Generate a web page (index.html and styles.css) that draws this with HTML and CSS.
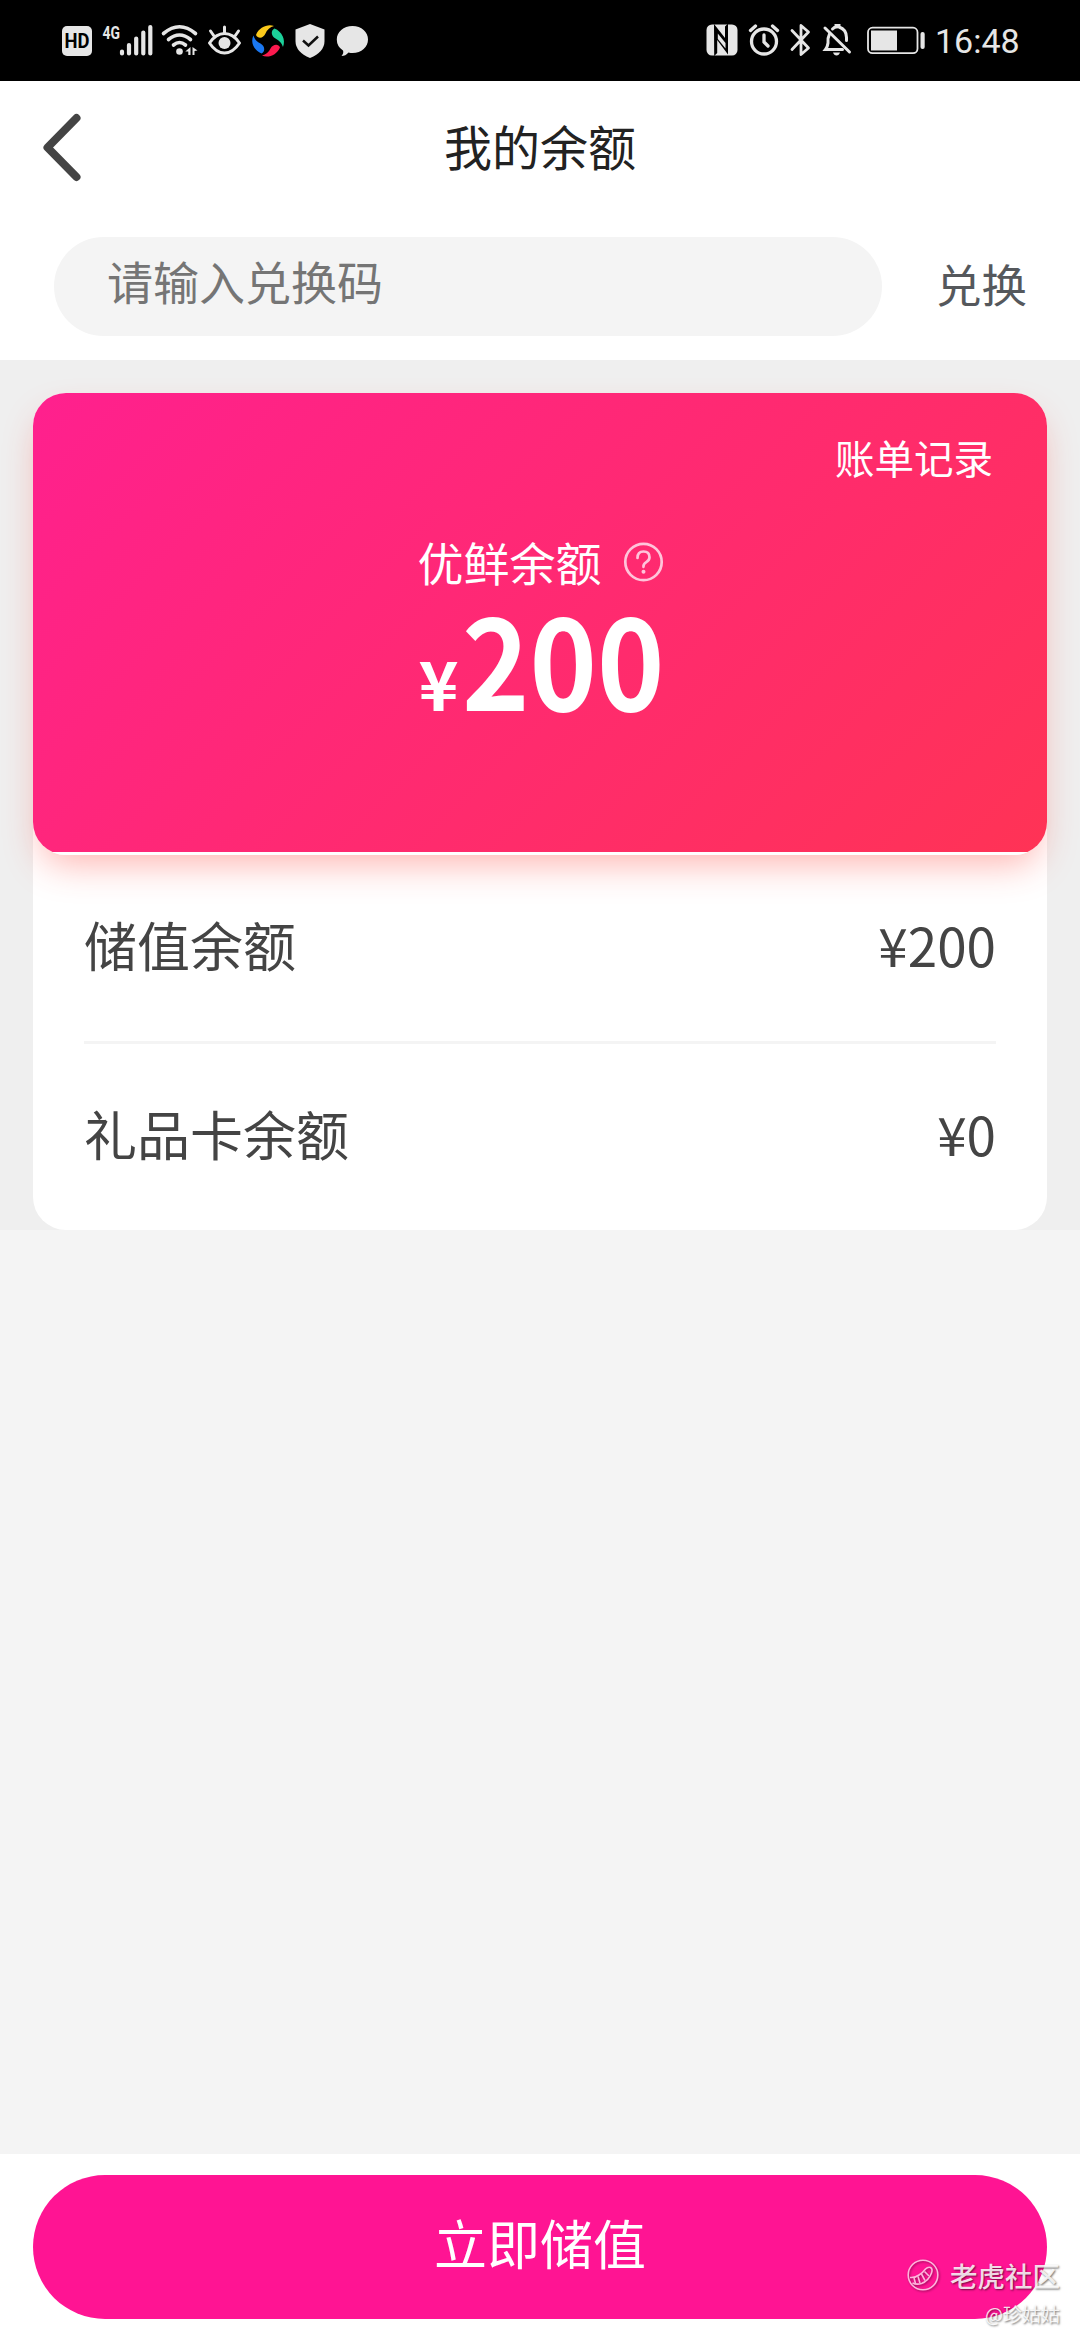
FILE: index.html
```
<!DOCTYPE html>
<html lang="zh-CN">

<head>
    <title>我的余额</title>
    <meta charset="utf-8" />
    <link rel="stylesheet" href="styles.css">
</head>

<body>
    <div class="status">
        <div class="status-icons">
            <svg width="37" height="60" viewBox="60 10 37 60">
                <rect x="62" y="26" width="30" height="30" rx="5" fill="#e6e6e6" />
                <text x="77" y="47.8" class="hd" text-anchor="middle" textLength="25" lengthAdjust="spacingAndGlyphs">HD</text>
            </svg>
            <svg width="61" height="60" viewBox="97 10 61 60">
                <text x="102.5" y="38.5" class="net" textLength="17.5" lengthAdjust="spacingAndGlyphs">4G</text>
                <path d="M122 51.5v2M129 45v8.500M136.200 38.500v15M143.300 32.500v21M150.300 27v26.500" fill="none" stroke="#e6e6e6" stroke-width="4.200" stroke-linecap="round" />
            </svg>
            <svg width="46" height="60" viewBox="158 10 46 60">
                <g fill="none" stroke="#e6e6e6" stroke-width="3.600" stroke-linecap="round">
                    <path d="M163.500 33.500Q179.500 20 195.500 33.500" />
                    <path d="M168.500 39.500Q179.500 30.500 190.500 39.500" />
                    <path d="M173.500 45Q179.500 40 185.500 45" />
                </g>
                <circle cx="179.500" cy="51.500" r="3.300" fill="#e6e6e6" />
                <path d="M190.500 47v8h-2.200v-3.600h-3zM192.500 47l5 3.500-3 .5v4h-2z" fill="#e6e6e6" />
            </svg>
            <svg width="43" height="60" viewBox="204 10 43 60">
                <path d="M209.500 43Q216 33.500 224.500 33.500T239.500 43Q233 53 224.500 53T209.500 43z" fill="none" stroke="#e6e6e6" stroke-width="3" stroke-linejoin="round" />
                <circle cx="224.500" cy="43" r="6" fill="#e6e6e6" />
                <path d="M210.500 31l3.500 5M224.500 27v6M238.500 31l-3.500 5" stroke="#e6e6e6" stroke-width="3" stroke-linecap="round" />
            </svg>
            <svg width="43" height="60" viewBox="247 10 43 60">
                <path d="M256 35C259 27 268 23.500 274 26Q268 27.500 265.500 33.500C263.500 38.500 258 39 256 35z" fill="#fbc91b" />
                <path d="M274.500 28.500C282 31.500 286 40 283 47Q281.500 41.500 275.500 38.500C271 36 270.500 30.500 274.500 28.500z" fill="#1cd19a" />
                <path d="M280 47.500C277 55 268 58.500 262 55.500Q268 54 270.500 48.500C273 44 278.500 43.500 280 47.500z" fill="#fb1a4f" />
                <path d="M261.500 53.500C254 50.500 250 42 253.500 35.500Q254.500 40.500 260.500 43.500C265 46 265.500 51.500 261.500 53.500z" fill="#1a78f2" />
            </svg>
            <svg width="42" height="60" viewBox="290 10 42 60">
                <path d="M310 24l14.500 5.500v11.500q0 11-14.500 17-14.500-6-14.500-17v-11.500z" fill="#e6e6e6" />
                <path d="M303 40.500l5.500 5 9.500-9" fill="none" stroke="#111" stroke-width="2.500" />
            </svg>
            <svg width="40" height="60" viewBox="332 10 40 60">
                <path d="M352.500 26c9 0 15.500 6 15.500 13.500S361.500 53 352.500 53q-2 0-4-.5-3 3.500-7 3.500 2.500-3 1.500-5.500-6.200-4-6.200-11C336.800 32 343.500 26 352.500 26z" fill="#e6e6e6" />
            </svg>
        </div>
        <div class="status-icons">
            <svg width="46" height="60" viewBox="700 10 46 60">
                <rect x="706.500" y="24.500" width="31" height="31" rx="5.500" fill="#e6e6e6" />
                <path d="M714 24l11 14v-11.500l3-3v31l-10.800-14.500v13l-3 3z" fill="#000" />
                <path d="M717.800 33.500l7.700 9.500v5.500l-7.700-9.500z" fill="#e6e6e6" />
            </svg>
            <svg width="38" height="60" viewBox="746 10 38 60">
                <g fill="none" stroke="#e6e6e6" stroke-width="3.300" stroke-linecap="round">
                    <circle cx="764" cy="41.500" r="12.500" />
                    <path d="M764 35v7l4 4M750.500 30.500l5-4.500M777.500 30.500l-5-4.500" />
                </g>
            </svg>
            <svg width="35" height="60" viewBox="784 10 35 60">
                <path d="M792 30.500l16.500 17.500-7.500 6.500v-29l7.500 6.500-16.500 17.500" fill="none" stroke="#e6e6e6" stroke-width="2.800" stroke-linejoin="round" stroke-linecap="round" />
            </svg>
            <svg width="43" height="60" viewBox="819 10 43 60">
                <g fill="none" stroke="#e6e6e6" stroke-width="3" stroke-linecap="round">
                    <path d="M825 28l24.500 24" />
                    <path d="M829.500 34q-2 4-1.500 9-.5 4-2.500 6.500h17" />
                    <path d="M832.500 29q2-2 3.500-2v-1.500h3v1.500q7.500 2.500 7.500 10.500v3" />
                </g>
                <path d="M833 52.500h7q-1 3-3.500 3t-3.500-3z" fill="#e6e6e6" />
            </svg>
            <svg width="68" height="60" viewBox="862 10 68 60">
                <rect x="868" y="27.700" width="49.500" height="25.500" rx="4.500" fill="none" stroke="#e6e6e6" stroke-width="1.800" />
                <rect x="871" y="30.500" width="26" height="20" fill="#e6e6e6" />
                <rect x="920.500" y="32" width="4.200" height="17" rx="2" fill="#e6e6e6" />
            </svg>
            <span class="clock">16:48</span>
        </div>
    </div>

    <div class="header">
        <div class="titlebar">
            <svg class="back" width="60" height="80" viewBox="0 0 60 80">
                <path d="M43.500 9L14.500 38.500l29 29.500" />
            </svg>
            <span class="title">我的余额</span>
        </div>
        <div class="redeem">
            <input class="code" type="text" placeholder="请输入兑换码">
            <span class="redeem-btn">兑换</span>
        </div>
    </div>

    <div class="balance">
        <div class="panel">
            <div class="card">
                <div class="bill">账单记录</div>
                <div class="label">
                    <span>优鲜余额</span>
                    <svg width="40" height="40" viewBox="0 0 40 40">
                        <circle cx="20.500" cy="21" r="18.200" />
                        <path d="M14.500 17q0-6.500 6-6.500t6 5.800q0 3-3.200 4.800t-2.800 4.700" />
                        <circle class="dot" cx="20.500" cy="30.800" r="2" />
                    </svg>
                </div>
                <div class="amount"><span class="yen">¥</span><span class="num">200</span></div>
            </div>
            <div class="row">
                <span>储值余额</span>
                <span>¥200</span>
            </div>
            <div class="row">
                <span>礼品卡余额</span>
                <span>¥0</span>
            </div>
        </div>
    </div>

    <div class="footer">
        <div class="submit">立即储值</div>
        <div class="mark">
            <div class="mark-name">
                <svg width="32" height="32" viewBox="0 0 32 32">
                    <circle cx="16" cy="16" r="14.800" />
                    <path d="M3 18.500q5 .5 9-2.500 4-2.500 6.500-6 2.500-2.500 5-1.500 2.500 1.500 1 5.500-3 8-10 10.500-5 1.500-9-.5" />
                    <path d="M7 19l1.500 5.500M11 17.500l2 6.500M14.500 15l3.500 6.500M17.500 12.500l4.500 4.500" />
                </svg>
                <span>老虎社区</span>
            </div>
            <div class="mark-user">@珍姑姑</div>
        </div>
    </div>
</body>

</html>
```
FILE: styles.css
```
* {
    box-sizing: border-box;
}

body {
    margin: 0;
    width: 1080px;
    height: 2340px;
    display: flex;
    flex-direction: column;
    overflow: hidden;
    background: #f4f4f4;
    font-family: "Noto Sans CJK SC", sans-serif;
}

svg {
    display: block;
    flex: none;
    overflow: visible;
}

/* status bar */
.status {
    height: 81px;
    padding: 10px 59px 11px 60px;
    display: flex;
    justify-content: space-between;
    background: #000;
}

.status-icons {
    display: flex;
}

.hd {
    font: 700 20px Roboto, sans-serif;
    fill: #000;
}

.net {
    font: 700 19px Roboto, sans-serif;
    fill: #e6e6e6;
}

.clock {
    width: 91px;
    padding-left: 5px;
    font: 34px/62px Roboto, sans-serif;
    color: #e6e6e6;
}

/* header */
.header {
    height: 279px;
    background: #fff;
}

.titlebar {
    height: 156px;
    padding: 0 33px 20px;
    display: grid;
    grid-template-columns: 60px 1fr 60px;
    align-items: center;
}

.back path {
    fill: none;
    stroke: #444;
    stroke-width: 8;
    stroke-linecap: round;
    stroke-linejoin: round;
}

.title {
    padding-bottom: 8px;
    text-align: center;
    font-size: 48px;
    line-height: 60px;
    color: #222;
}

.redeem {
    padding-left: 54px;
    display: flex;
    align-items: center;
}

.code {
    width: 828px;
    height: 99px;
    flex: none;
    padding: 0 53px 13px;
    border: 0;
    border-radius: 50px;
    background: #f4f4f4;
    font: 46px "Noto Sans CJK SC", sans-serif;
}

.code::placeholder {
    color: #757575;
}

.redeem-btn {
    height: 99px;
    margin-left: 54px;
    font-size: 45.500px;
    line-height: 93px;
    white-space: nowrap;
    color: #55585c;
}

/* balance */
.balance {
    height: 870px;
    padding: 33px 33px 0;
    background: #efefef;
}

.panel {
    height: 837px;
    border-radius: 33px;
    background: #fff;
    display: flex;
    flex-direction: column;
}

.card {
    height: 462px;
    flex: none;
    padding: 35px 54px 0;
    border-radius: 33px;
    background: linear-gradient(#fff, #fff) bottom / 100% 3px no-repeat, linear-gradient(135deg, #ff208e, #ff3355);
    box-shadow: 0 17px 36px -8px rgba(255, 60, 50, .38);
    color: #fff;
}

.bill {
    text-align: right;
    font-size: 39.500px;
    line-height: 58px;
}

.label {
    margin-top: 41px;
    display: flex;
    justify-content: center;
    align-items: center;
    gap: 21px;
    font-size: 46px;
    line-height: 68px;
}

.label svg {
    fill: none;
    stroke: #ffc4da;
    stroke-width: 2.7;
    stroke-linecap: round;
}

.label .dot {
    fill: #ffc4da;
    stroke: none;
}

/* digits are narrower than the font's own */
.amount {
    display: flex;
    justify-content: center;
    align-items: baseline;
    line-height: 124px;
    font-weight: 700;
}

.yen {
    font-size: 68px;
}

.num {
    width: 200px;
    margin-left: 3px;
    font-size: 125px;
    transform: scaleX(.915);
    transform-origin: left;
}

.row {
    flex: 1;
    margin: 0 51px;
    padding-bottom: 9px;
    display: flex;
    justify-content: space-between;
    align-items: center;
    font-size: 53px;
    color: #444;
}

.row + .row {
    border-top: 3px solid #f4f4f4;
}

/* footer */
.footer {
    position: relative;
    height: 186px;
    margin-top: auto;
    padding: 21px 33px;
    background: #fff;
}

.submit {
    height: 144px;
    border-radius: 72px;
    background: #ff1493;
    text-align: center;
    font-size: 53px;
    line-height: 134px;
    color: #fff;
}

.mark {
    position: absolute;
    right: 20px;
    bottom: 12px;
    color: rgba(255, 255, 255, .85);
    text-shadow: 1px 1px 2px rgba(0, 0, 0, .55);
    text-align: right;
}

.mark-name {
    display: flex;
    align-items: center;
    gap: 11px;
    font-size: 27.500px;
    font-weight: 500;
    line-height: 40px;
}

.mark-name svg {
    fill: none;
    stroke: #ffb5dc;
    stroke-width: 1.6;
    filter: drop-shadow(1px 1px 1px rgba(0, 0, 0, .4));
}

.mark-user {
    margin-top: 5px;
    font-size: 19px;
    line-height: 28px;
}
```
